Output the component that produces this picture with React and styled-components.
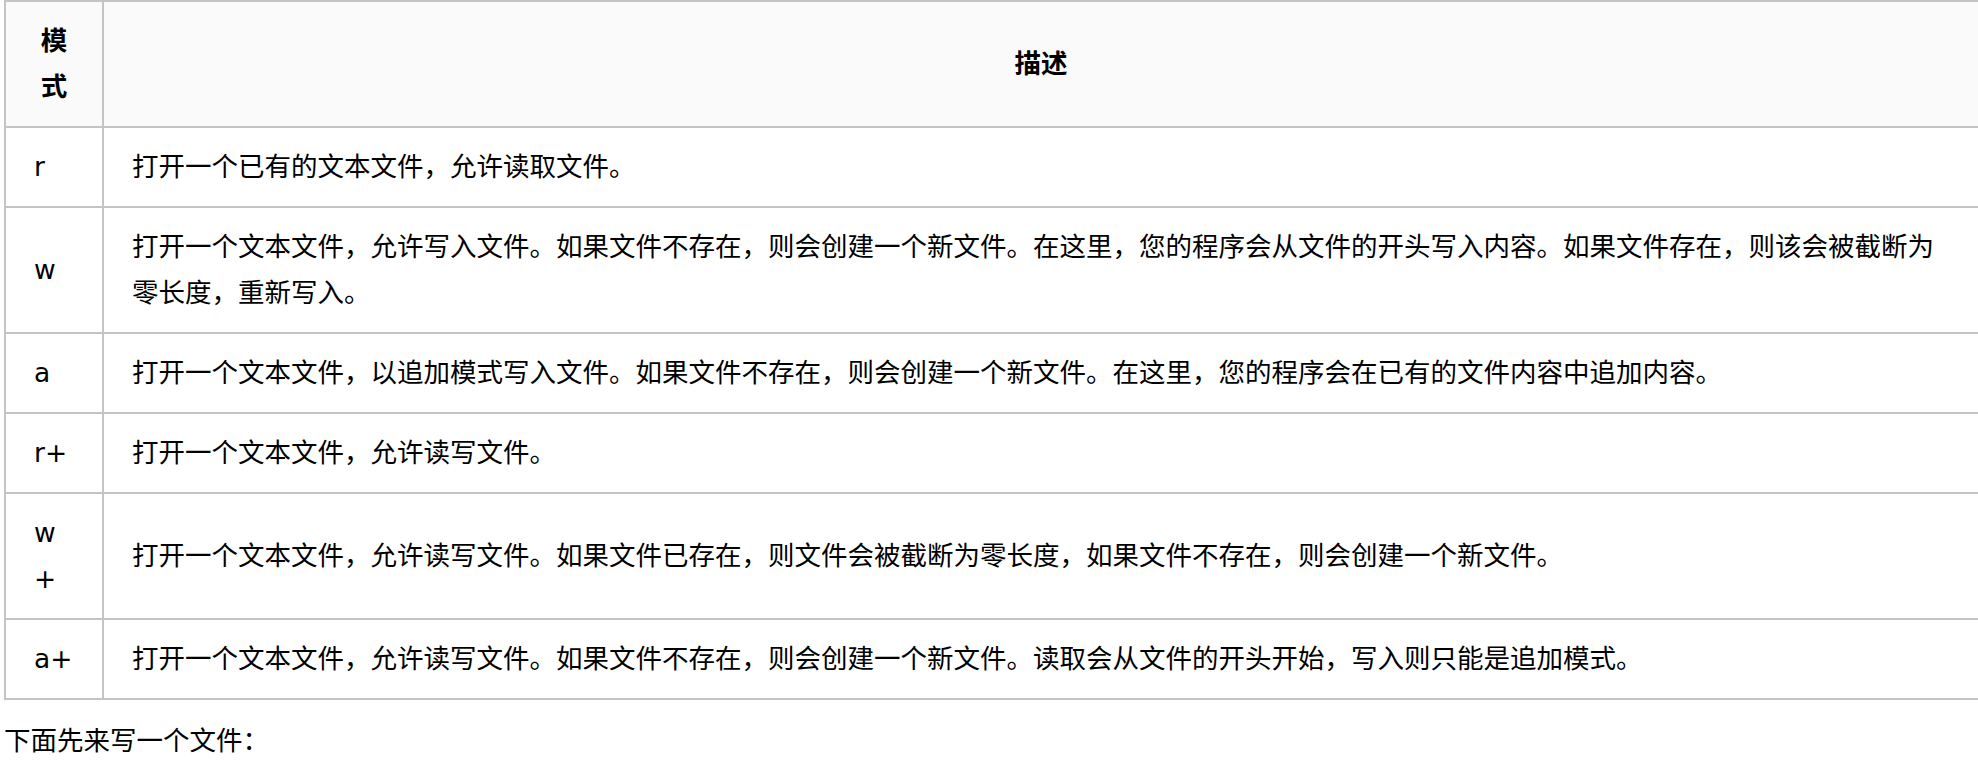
import React from 'react';
import styled, {createGlobalStyle} from 'styled-components';

const GlobalStyle = createGlobalStyle`
html, body {
  margin: 0;
  padding: 0;
  background: #ffffff;
  overflow: hidden;
}
`

const rows = [
  {mode: 'r', desc: '打开一个已有的文本文件，允许读取文件。'},
  {mode: 'w', desc: '打开一个文本文件，允许写入文件。如果文件不存在，则会创建一个新文件。在这里，您的程序会从文件的开头写入内容。如果文件存在，则该会被截断为零长度，重新写入。'},
  {mode: 'a', desc: '打开一个文本文件，以追加模式写入文件。如果文件不存在，则会创建一个新文件。在这里，您的程序会在已有的文件内容中追加内容。'},
  {mode: 'r+', desc: '打开一个文本文件，允许读写文件。'},
  {mode: 'w+', desc: '打开一个文本文件，允许读写文件。如果文件已存在，则文件会被截断为零长度，如果文件不存在，则会创建一个新文件。'},
  {mode: 'a+', desc: '打开一个文本文件，允许读写文件。如果文件不存在，则会创建一个新文件。读取会从文件的开头开始，写入则只能是追加模式。'},
];

function App() {
  return (
    <>
      <GlobalStyle />
      <Page>
        <Table>
          <thead>
            <tr>
              <HeadCell narrow>模式</HeadCell>
              <HeadCell>描述</HeadCell>
            </tr>
          </thead>
          <tbody>
            {rows.map((row) => (
              <tr key={row.mode}>
                <ModeCell>{row.mode}</ModeCell>
                <DescCell>{row.desc}</DescCell>
              </tr>
            ))}
          </tbody>
        </Table>
        <Para>下面先来写一个文件：</Para>
      </Page>
    </>
  )
}

export default App

const Page = styled.div`
padding: 0 0 0 4px;
font-family: "DejaVu Sans", "Noto Sans CJK SC", sans-serif;
font-size: 26.5px;
line-height: 46px;
color: #000;
`

const Table = styled.table`
border-collapse: collapse;
table-layout: fixed;
width: 1976px;
`

const HeadCell = styled.th`
box-sizing: content-box;
width: ${({narrow}) => (narrow ? '40px' : 'auto')};
padding: 16px 28px;
border: 2px solid #c4c4c4;
background-color: #fafafa;
font-weight: bold;
text-align: center;
vertical-align: middle;
`

const ModeCell = styled.td`
padding: 16px 28px;
border: 2px solid #c4c4c4;
word-break: break-all;
vertical-align: middle;
`

const DescCell = styled.td`
padding: 16px 28px;
border: 2px solid #c4c4c4;
vertical-align: middle;
`

const Para = styled.p`
margin: 18px 0 0 0;
`
